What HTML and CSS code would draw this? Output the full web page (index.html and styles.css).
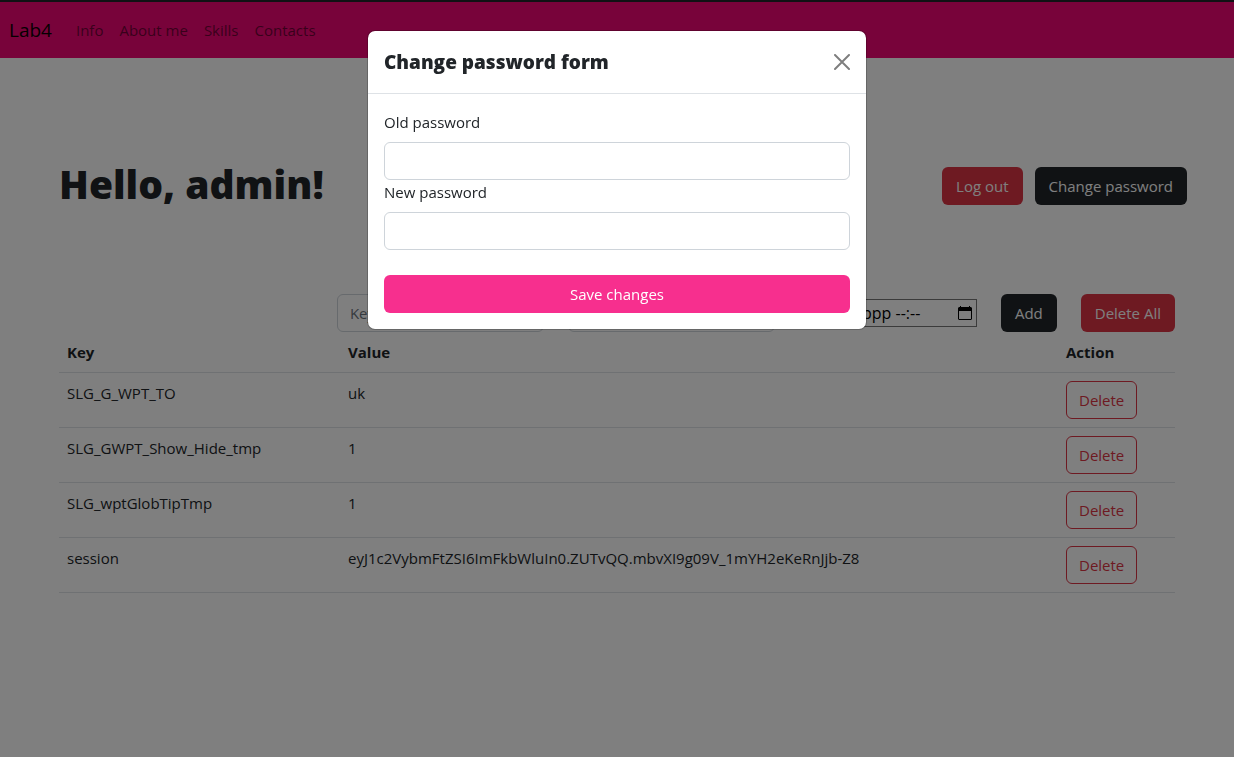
FILE: index.html
```html
<!DOCTYPE html>
<html lang="en">
<head>
<meta charset="utf-8">
<meta name="viewport" content="width=device-width, initial-scale=1">
<title>Lab4</title>
<link rel="stylesheet" href="styles.css">
</head>
<body>
<nav class="navbar">
  <a class="brand" href="#">Lab4</a>
  <a class="nav-link" href="#">Info</a>
  <a class="nav-link" href="#">About me</a>
  <a class="nav-link" href="#">Skills</a>
  <a class="nav-link" href="#">Contacts</a>
</nav>

<main class="container">
  <header class="hero">
    <h1 class="greeting">Hello, admin!</h1>
    <div class="hero-actions">
      <button class="btn btn-danger" type="button">Log out</button>
      <button class="btn btn-dark" type="button">Change password</button>
    </div>
  </header>

  <section class="cookies">
    <form class="cookie-form">
      <input class="field" type="text" placeholder="Key" aria-label="Key">
      <input class="field" type="text" placeholder="Value" aria-label="Value">
      <div class="date-box">
        <input class="date-input" type="text" value="дд.мм.рррр --:--" aria-label="Expiration">
        <svg class="date-icon" viewBox="0 0 14 16" aria-hidden="true"><path fill="#000" fill-rule="evenodd" d="M2 1h1v1h8V1h1v1h1l1 1v11l-1 1H1l-1-1V3l1-1h1zM1 6v8h12V6z"/></svg>
      </div>
      <button class="btn btn-dark" type="button">Add</button>
      <button class="btn btn-danger" type="button">Delete All</button>
    </form>
    <table class="table">
      <thead>
        <tr><th class="col-key">Key</th><th>Value</th><th class="col-action">Action</th></tr>
      </thead>
      <tbody>
        <tr><td>SLG_G_WPT_TO</td><td>uk</td><td><button class="btn btn-outline" type="button">Delete</button></td></tr>
        <tr><td>SLG_GWPT_Show_Hide_tmp</td><td>1</td><td><button class="btn btn-outline" type="button">Delete</button></td></tr>
        <tr><td>SLG_wptGlobTipTmp</td><td>1</td><td><button class="btn btn-outline" type="button">Delete</button></td></tr>
        <tr><td>session</td><td>eyJ1c2VybmFtZSI6ImFkbWluIn0.ZUTvQQ.mbvXI9g09V_1mYH2eKeRnJjb-Z8</td><td><button class="btn btn-outline" type="button">Delete</button></td></tr>
      </tbody>
    </table>
  </section>
</main>

<div class="backdrop">
  <div class="modal" role="dialog" aria-modal="true" aria-labelledby="modal-title">
    <div class="modal-header">
      <h2 class="modal-title" id="modal-title">Change password form</h2>
      <button class="close" type="button" aria-label="Close">
        <svg class="close-icon" viewBox="0 0 16 16" aria-hidden="true"><path d="M1 1l14 14M15 1L1 15" fill="none" stroke="#000" stroke-width="2" stroke-linecap="round"/></svg>
      </button>
    </div>
    <form class="modal-body">
      <label class="label" for="old-password">Old password</label>
      <input class="field" id="old-password" type="password">
      <label class="label" for="new-password">New password</label>
      <input class="field" id="new-password" type="password">
      <button class="btn btn-pink" type="button">Save changes</button>
    </form>
  </div>
</div>
</body>
</html>
```
FILE: styles.css
```css
* { box-sizing: border-box; }

body {
  margin: 0;
  background: #fff;
  color: #212529;
  font: 15px/24px "Open Sans", "Noto Sans", sans-serif;
}

.navbar {
  display: flex;
  align-items: center;
  height: 58px;
  padding: 0 9px;
  border-top: 2px solid #212529;
  background: #f00674;
}

.brand {
  margin-right: 16px;
  color: #0a0003;
  font-size: 19px;
  text-decoration: none;
}

.nav-link {
  padding: 8px;
  color: rgba(0, 0, 0, .55);
  text-decoration: none;
}

.container {
  max-width: 1140px;
  margin: 0 auto;
}

.hero {
  display: flex;
  align-items: center;
  justify-content: space-between;
  padding: 96px 0;
}

.greeting {
  margin: 0;
  padding-left: 12px;
  font-size: 39px;
  font-weight: 800;
  line-height: 60px;
}

.hero-actions {
  display: flex;
  gap: 12px;
  padding-top: 4px;
}

.btn {
  height: 38px;
  padding: 0 12px;
  border: 1px solid transparent;
  border-radius: 6px;
  color: #fff;
  font: inherit;
  white-space: nowrap;
}

.btn-danger,
.btn-dark { padding: 0 13px; }

.btn-danger { background: #dc3545; }
.btn-dark { background: #212529; }

.btn-outline {
  display: block;
  border-color: #dc3545;
  background: none;
  color: #dc3545;
}

.cookies { padding: 0 12px; }

.cookie-form {
  display: flex;
  align-items: center;
  justify-content: flex-end;
  gap: 24px;
  margin-top: -16px;
}

.field {
  width: 100%;
  height: 38px;
  padding: 0 12px;
  border: 1px solid #ced4da;
  border-radius: 6px;
  background: #fff;
  color: inherit;
  font: inherit;
}

.cookie-form .field { width: 207px; }

.field::placeholder { color: #6c757d; opacity: 1; }

.date-box { position: relative; width: 178px; }

.date-input {
  display: block;
  width: 100%;
  height: 28px;
  padding: 0 2px;
  border: 1px solid #767676;
  background: #fff;
  color: #000;
  font: inherit;
  font-size: 16px;
}

.date-icon {
  position: absolute;
  top: 6px;
  right: 5px;
  width: 14px;
  height: 16px;
}

.table {
  width: 100%;
  border-collapse: collapse;
  table-layout: fixed;
}

.table th,
.table td {
  padding: 8px;
  border-bottom: 1px solid #dee2e6;
  text-align: left;
  vertical-align: top;
}

.table th { font-weight: 700; }

.col-key { width: 281px; }
.col-action { width: 117px; }

.backdrop {
  position: fixed;
  inset: 0;
  padding: 30px 8px;
  background: rgba(0, 0, 0, .5);
}

.modal {
  max-width: 500px;
  margin: 0 auto;
  border: 1px solid rgba(0, 0, 0, .2);
  border-radius: 8px;
  background: #fff;
  background-clip: padding-box;
}

.modal-header {
  display: flex;
  align-items: center;
  justify-content: space-between;
  padding: 16px;
  border-bottom: 1px solid #dee2e6;
}

.modal-title {
  margin: 0;
  font-size: 19px;
  font-weight: 800;
  line-height: 30px;
}

.close {
  display: flex;
  padding: 0;
  border: 0;
  background: none;
  opacity: .5;
}

.close-icon { width: 16px; height: 16px; }

.modal-body { padding: 16px; }

.label { display: block; margin-bottom: 8px; }

.modal-body .field { display: block; }

.btn-pink {
  width: 100%;
  margin-top: 25px;
  background: #f72f8e;
}
```
